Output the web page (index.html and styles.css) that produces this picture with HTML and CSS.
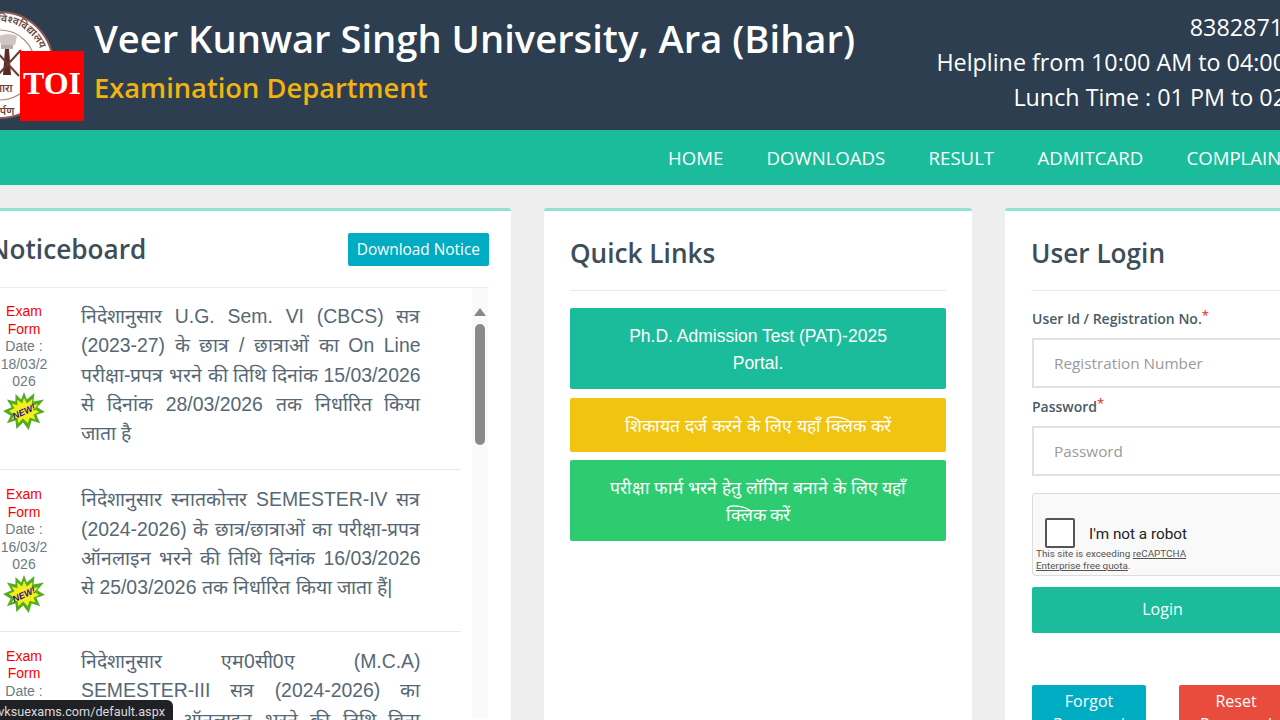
FILE: index.html
```html
<!DOCTYPE html>
<html lang="en">
<head>
<meta charset="utf-8">
<title>Veer Kunwar Singh University</title>
<link rel="stylesheet" href="styles.css">
</head>
<body>
<div class="page">
  <header class="masthead">
    <svg class="seal" width="110" height="110" viewBox="0 0 110 110">
      <defs><path id="arc" d="M55 98a43 43 0 1 1 .1 0"/></defs>
      <circle cx="55" cy="55" r="53" fill="#fff" stroke="#8a5a50" stroke-width="2"/>
      <circle cx="55" cy="55" r="35" fill="none" stroke="#b08d85" stroke-width="1.2"/>
      <text class="seal-text"><textPath href="#arc" startOffset="46%">ह विश्वविद्यालय</textPath></text>
      <path d="M54 26q9-4 18 0l-2 9h-14z" fill="#cfc6c2"/>
      <path d="M56 35h12v4h-12z" fill="#b9aca8"/>
      <path d="M60 39h4l2 26h-8z" fill="#5b2a22"/>
      <path d="M50 40l24 26M76 40L52 66" stroke="#6d3a30" stroke-width="2"/>
      <text class="seal-text" x="58" y="82" text-anchor="middle">आरा</text>
      <text class="seal-text" x="55" y="105" text-anchor="middle">समर्पण</text>
    </svg>
    <div class="toi">TOI</div>
    <div class="titles">
      <h1>Veer Kunwar Singh University, Ara (Bihar)</h1>
      <h2>Examination Department</h2>
    </div>
    <div class="helpline">
      <p class="phone">8382871000</p>
      <p>Helpline from 10:00 AM to 04:00 PM</p>
      <p>Lunch Time : 01 PM to 02 PM</p>
    </div>
  </header>
  <nav class="menu">
    <a>HOME</a><a>DOWNLOADS</a><a>RESULT</a><a>ADMITCARD</a><a>COMPLAINT</a>
  </nav>
  <main class="panels">
    <section class="panel notice">
      <div class="notice-head">
        <h3>Noticeboard</h3>
        <a class="download">Download Notice</a>
      </div>
      <div class="notice-scroll">
        <div class="notice-list">
          <article class="item">
            <div class="meta">
              <span class="red">Exam Form</span>
              <span class="date">Date : 18/03/2026</span>
              <svg class="new" width="42" height="38" viewBox="0 0 44 40"><polygon points="22,0 25,8 33,1 32,10 43,8 36,16 44,21 35,24 39,33 30,30 27,40 21,32 14,39 13,30 4,33 8,25 0,20 9,16 4,8 13,10 13,2 19,8" fill="#4fae1f"/><polygon points="22,6 25,12 31,7 30,14 37,13 33,18 38,21 32,24 34,29 28,27 26,33 21,28 16,33 15,27 9,29 12,24 6,20 12,17 9,12 15,14 15,8 20,12" fill="#f4ee1a"/><text class="new-text" x="22" y="24" text-anchor="middle" transform="rotate(-25 22 21)">NEW!</text></svg>
            </div>
            <p>निदेशानुसार U.G. Sem. VI (CBCS) सत्र (2023-27) के छात्र / छात्राओं का On Line परीक्षा-प्रपत्र भरने की तिथि दिनांक 15/03/2026 से दिनांक 28/03/2026 तक निर्धारित किया जाता है</p>
          </article>
          <article class="item">
            <div class="meta">
              <span class="red">Exam Form</span>
              <span class="date">Date : 16/03/2026</span>
              <svg class="new" width="42" height="38" viewBox="0 0 44 40"><polygon points="22,0 25,8 33,1 32,10 43,8 36,16 44,21 35,24 39,33 30,30 27,40 21,32 14,39 13,30 4,33 8,25 0,20 9,16 4,8 13,10 13,2 19,8" fill="#4fae1f"/><polygon points="22,6 25,12 31,7 30,14 37,13 33,18 38,21 32,24 34,29 28,27 26,33 21,28 16,33 15,27 9,29 12,24 6,20 12,17 9,12 15,14 15,8 20,12" fill="#f4ee1a"/><text class="new-text" x="22" y="24" text-anchor="middle" transform="rotate(-25 22 21)">NEW!</text></svg>
            </div>
            <p>निदेशानुसार स्नातकोत्तर SEMESTER-IV सत्र (2024-2026) के छात्र/छात्राओं का परीक्षा-प्रपत्र ऑनलाइन भरने की तिथि दिनांक 16/03/2026 से 25/03/2026 तक निर्धारित किया जाता हैं|</p>
          </article>
          <article class="item">
            <div class="meta">
              <span class="red">Exam Form</span>
              <span class="date">Date : 10/03/2026</span>
            </div>
            <p>निदेशानुसार एम0सी0ए (M.C.A) SEMESTER-III सत्र (2024-2026) का परीक्षा प्रपत्र ऑनलाइन भरने की तिथि बिना विलंब शुल्क के निर्धारित किया जाता है</p>
          </article>
        </div>
        <div class="scrollbar"><span class="arrow"></span><span class="thumb"></span></div>
      </div>
    </section>
    <section class="panel">
      <h3 class="ruled">Quick Links</h3>
      <div class="links">
        <a class="link teal">Ph.D. Admission Test (PAT)-2025 Portal.</a>
        <a class="link yellow">शिकायत दर्ज करने के लिए यहाँ क्लिक करें</a>
        <a class="link green">परीक्षा फार्म भरने हेतु लॉगिन बनाने के लिए यहाँ क्लिक करें</a>
      </div>
    </section>
    <section class="panel">
      <h3 class="ruled">User Login</h3>
      <form class="login">
        <label>User Id / Registration No.<em>*</em></label>
        <input class="field" placeholder="Registration Number">
        <label class="second">Password<em>*</em></label>
        <input class="field" placeholder="Password">
        <div class="captcha">
          <div class="robot"><span class="box"></span><span class="robot-label">I'm not a robot</span></div>
          <small>This site is exceeding <u>reCAPTCHA Enterprise free quota</u>.</small>
        </div>
        <a class="submit">Login</a>
        <div class="pair">
          <a class="forgot">Forgot Password</a>
          <a class="reset">Reset Password</a>
        </div>
      </form>
    </section>
  </main>
  <div class="status"><span>https://vksuexams.com/default.aspx</span></div>
</div>
</body>
</html>
```
FILE: styles.css
```css
html, body { margin: 0; height: 100%; overflow: hidden; }
body { font-family: "Open Sans", "Noto Sans", sans-serif; background: #eeeeee; color: #34495e; }
.page { position: relative; width: 1280px; height: 720px; overflow: hidden; }
.masthead { height: 130px; background: #2c3e50; display: flex; position: relative; }
.seal { position: absolute; left: -55px; top: 10px; }
.seal-text { font-size: 10.5px; fill: #6e4238; font-family: "Noto Sans", sans-serif; font-weight: 600; }
.toi { position: absolute; left: 20px; top: 51px; width: 64px; height: 70px; background: #ff0000; color: #fff; font: 700 32px/64px "Liberation Serif", serif; text-align: center; }
.titles { margin-left: 94px; padding-top: 13px; flex: none; width: 792px; }
.titles h1 { margin: 0; font-size: 38.15px; line-height: 50px; font-weight: 600; color: #fff; white-space: nowrap; }
.titles h2 { margin: 6px 0 0; font-size: 27.3px; line-height: 38px; font-weight: 600; color: #f1b30f; white-space: nowrap; }
.helpline { flex: none; width: 441px; text-align: right; color: #fff; font-size: 23.3px; line-height: 34.8px; padding-top: 10px; white-space: nowrap; }
.helpline p { margin: 0; }
.helpline .phone { padding-right: 4px; }
.menu { height: 55px; background: #1abc9c; display: flex; gap: 43.3px; padding-left: 668px; align-items: center; color: #fff; font-size: 18.6px; white-space: nowrap; }
.panels { display: grid; grid-template-columns: 538px 428px 428px; gap: 33px; margin: 23px 0 0 -27px; align-items: start; }
.panel { background: #fff; border-top: 3px solid #8fe3d2; border-radius: 3px 3px 0 0; height: 560px; padding: 0 26px; box-sizing: border-box; }
h3 { margin: 0; font-size: 26.2px; font-weight: 600; color: #3d4d5a; }
.ruled { height: 79px; line-height: 84px; border-bottom: 1px solid #e8e8e8; margin-bottom: 17px; }
.notice { padding: 0 22px; }
.notice-head { display: flex; justify-content: space-between; align-items: center; height: 76px; }
.notice-head h3 { margin-left: -6px; line-height: 74px; }
.download { background: #00acc1; color: #fff; font-size: 15.4px; line-height: 33px; padding: 0 9px; border-radius: 2px; }
.notice-scroll { display: flex; height: 430px; border-top: 1px solid #eeeeee; margin: 0 0 0 -22px; }
.notice-list { width: 488px; flex: none; }
.item { display: flex; border-bottom: 1px solid #e8e8e8; padding: 15px 0 18px 27px; box-sizing: border-box; }
.item:first-child { padding-top: 14px; }
.item:last-child { border-bottom: 0; }
.meta { width: 48px; margin-right: 33px; padding-top: 1px; font: 14px/17.5px "Liberation Sans", sans-serif; text-align: center; word-break: break-all; color: #6c7a86; flex: none; }
.meta span { display: block; }
.red { color: #ff0000; word-break: normal; }
.new { display: block; margin: 1px auto 0; }
.new-text { font: italic 700 9.5px "Liberation Sans", sans-serif; fill: #2a0a8a; }
.item p { margin: 0 0 3px; width: 339.5px; flex: none; font: 19.4px/29.3px "Liberation Sans", sans-serif; color: #566875; text-align: justify; }
.scrollbar { width: 16px; margin-left: 11px; background: #fafafa; display: flex; flex-direction: column; align-items: center; padding-top: 20px; flex: none; }
.arrow { width: 0; height: 0; border: 6px solid transparent; border-top: 0; border-bottom: 8px solid #888; }
.thumb { width: 10px; height: 121px; background: #8a8a8a; border-radius: 5px; margin-top: 8px; }
.links { display: flex; flex-direction: column; gap: 8.5px; }
.link { display: block; color: #fff; text-align: center; font: 17.5px/27px "Liberation Sans", sans-serif; padding: 15px 35px 12px; border-radius: 2px; }
.teal { background: #1abc9c; }
.yellow { background: #f1c40f; }
.green { background: #2ecc71; }
.login { width: 261px; display: block; margin-left: 1px; padding-top: 1px; }
.login label { display: block; font-size: 14px; font-weight: 600; color: #4a5a68; line-height: 20px; white-space: nowrap; }
.login label em { color: #e74c3c; font-style: normal; font-size: 13px; position: relative; top: -4px; }
.login .second { margin-top: 9px; }
.field { display: block; width: 300px; height: 50px; box-sizing: border-box; border: 2px solid #e1e1e1; padding: 0 20px; font: 15.3px "Open Sans", sans-serif; margin-top: 9px; outline: 0; color: #333; }
.field::placeholder { color: #9a9a9a; }
.captcha { width: 304px; height: 83px; box-sizing: border-box; margin-top: 17px; background: #f9f9f9; border: 1px solid #dcdcdc; border-radius: 3px; font-family: Roboto, sans-serif; padding: 24px 3px 0; color: #222; }
.robot { display: flex; align-items: center; gap: 14px; font-size: 15.3px; padding-left: 9px; }
.robot-label { padding-top: 2px; }
.box { width: 26px; height: 26px; border: 2px solid #555; border-radius: 2px; background: #fff; flex: none; }
.captcha small { display: block; font-size: 9.9px; line-height: 12px; color: #555; width: 170px; margin-top: 0; }
.submit { display: block; background: #1abc9c; color: #fff; text-align: center; font-size: 16px; line-height: 44px; padding-bottom: 2px; margin-top: 11px; border-radius: 2px; }
.pair { display: flex; gap: 33px; margin-top: 52px; }
.pair a { display: block; flex: 1; color: #fff; text-align: center; font-size: 16px; line-height: 23px; padding: 5px 10px; border-radius: 2px; }
.forgot { background: #00acc1; }
.reset { background: #e74c3c; }
.status { position: absolute; left: 0; bottom: 0; width: 173px; height: 20px; background: #202124; color: #d8dadd; border-top-right-radius: 6px; font: 12.7px/23px Roboto, sans-serif; overflow: hidden; display: flex; justify-content: flex-end; padding-right: 8px; box-sizing: border-box; }
.status span { flex: none; white-space: nowrap; }
```
